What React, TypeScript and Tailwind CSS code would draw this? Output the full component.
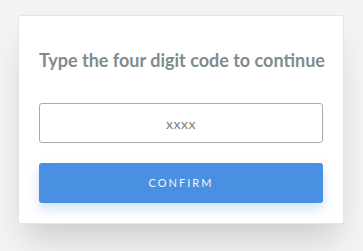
export default function App() {
  return (
    <div className="w-[363px] h-[251px] bg-[#f3f3f3] pt-[15px] pl-[18px] overflow-hidden" style={{ fontFamily: "Lato, 'Open Sans', sans-serif" }}>
      <div className="w-[326px] h-[209px] bg-white border border-[#e4e4e4] rounded-[3px] shadow-[0_22px_30px_-8px_rgba(0,0,0,0.16)] px-5 pt-[32px] flex flex-col">
        <h1 className="text-[18px] leading-[24px] font-bold text-[#7f8c8d] text-center whitespace-nowrap">Type the four digit code to continue</h1>
        <div className="mt-[31px] h-[40px] border border-[#aaaaaa] rounded-[3px] flex items-center justify-center text-[14px] text-[#808080] tracking-[0.5px]">xxxx</div>
        <button className="mt-[20px] h-[40px] bg-[#4a90e2] rounded-[3px] text-[11px] tracking-[2px] text-[#f0f6fd] shadow-[0_6px_12px_rgba(74,144,226,0.25)]">CONFIRM</button>
      </div>
    </div>
  );
}
